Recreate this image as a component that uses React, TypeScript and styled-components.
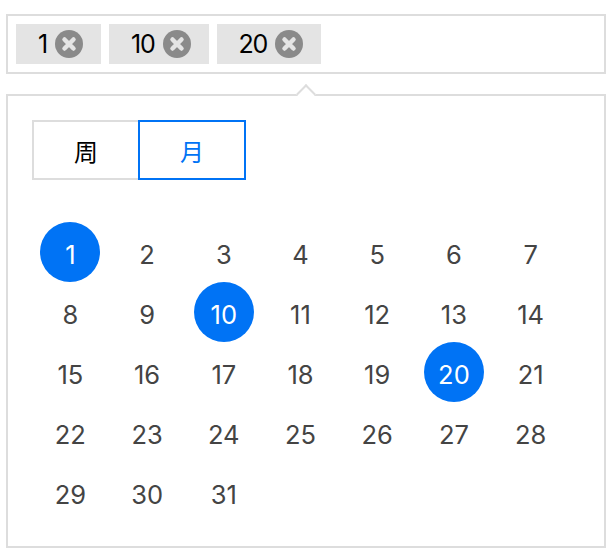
import { createGlobalStyle, styled } from "styled-components";

const GlobalStyle = createGlobalStyle`
  html, body {
    margin: 0;
    padding: 0;
    background: #fff;
  }
  body {
    font-family: Inter, "Noto Sans CJK SC", sans-serif;
  }
`;

const Page = styled.div`
  width: 600px;
  padding: 14px 0 0 6px;
`;
const TagBox = styled.div`
  box-sizing: border-box;
  height: 60px;
  padding: 8px;
  display: flex;
  gap: 8px;
  border: 2px solid #ddd;
`;
const Tag = styled.div`
  height: 40px;
  padding: 0 18px 0 22px;
  display: flex;
  align-items: center;
  gap: 8px;
  background: #e4e4e4;
  color: #000;
  font-size: 25px;
  letter-spacing: -1.2px;
`;
const Popover = styled.div`
  box-sizing: border-box;
  position: relative;
  height: 454px;
  margin-top: 20px;
  padding: 24px;
  border: 2px solid #ddd;
`;
const Arrow = styled.div`
  position: absolute;
  top: -9px;
  left: 291px;
  width: 14px;
  height: 14px;
  background: #fff;
  border-top: 2px solid #ddd;
  border-left: 2px solid #ddd;
  transform: rotate(45deg);
  box-sizing: border-box;
`;
const Toggle = styled.div`
  display: flex;
`;
const ToggleButton = styled.button<{ $active?: boolean }>`
  box-sizing: border-box;
  width: 108px;
  height: 60px;
  margin-right: -2px;
  position: relative;
  z-index: ${(p) => (p.$active ? 1 : 0)};
  border: 2px solid ${(p) => (p.$active ? "#0073f5" : "#ddd")};
  background: #fff;
  color: ${(p) => (p.$active ? "#0073f5" : "#000")};
  font-family: "Noto Sans CJK SC", sans-serif;
  font-size: 24px;
  padding: 0;
`;
const Days = styled.div`
  width: 537px;
  margin-top: 42px;
  display: grid;
  grid-template-columns: repeat(7, 1fr);
  grid-auto-rows: 60px;
`;
const Day = styled.div<{ $selected?: boolean }>`
  width: 60px;
  height: 60px;
  justify-self: center;
  display: flex;
  align-items: center;
  justify-content: center;
  border-radius: 50%;
  padding-top: 5px;
  box-sizing: border-box;
  background: ${(p) => (p.$selected ? "#0073f5" : "transparent")};
  color: ${(p) => (p.$selected ? "#fff" : "#444")};
  font-size: 25.5px;
`;

const selected = [1, 10, 20];

function CloseIcon() {
  return (
    <svg width="28" height="28" viewBox="0 0 28 28">
      <circle cx="14" cy="14" r="14" fill="#8a8a8a" />
      <path
        d="M9.5 9.5 L18.5 18.5 M18.5 9.5 L9.5 18.5"
        stroke="#e4e4e4"
        strokeWidth="4.5"
        strokeLinecap="round"
      />
    </svg>
  );
}

export default function App() {
  return (
    <Page>
      <GlobalStyle />
      <TagBox>
        {selected.map((d) => (
          <Tag key={d}>
            <span>{d}</span>
            <CloseIcon />
          </Tag>
        ))}
      </TagBox>
      <Popover>
        <Arrow />
        <Toggle>
          <ToggleButton>周</ToggleButton>
          <ToggleButton $active>月</ToggleButton>
        </Toggle>
        <Days>
          {Array.from({ length: 31 }, (_, i) => i + 1).map((d) => (
            <Day key={d} $selected={selected.includes(d)}>
              {d}
            </Day>
          ))}
        </Days>
      </Popover>
    </Page>
  );
}
